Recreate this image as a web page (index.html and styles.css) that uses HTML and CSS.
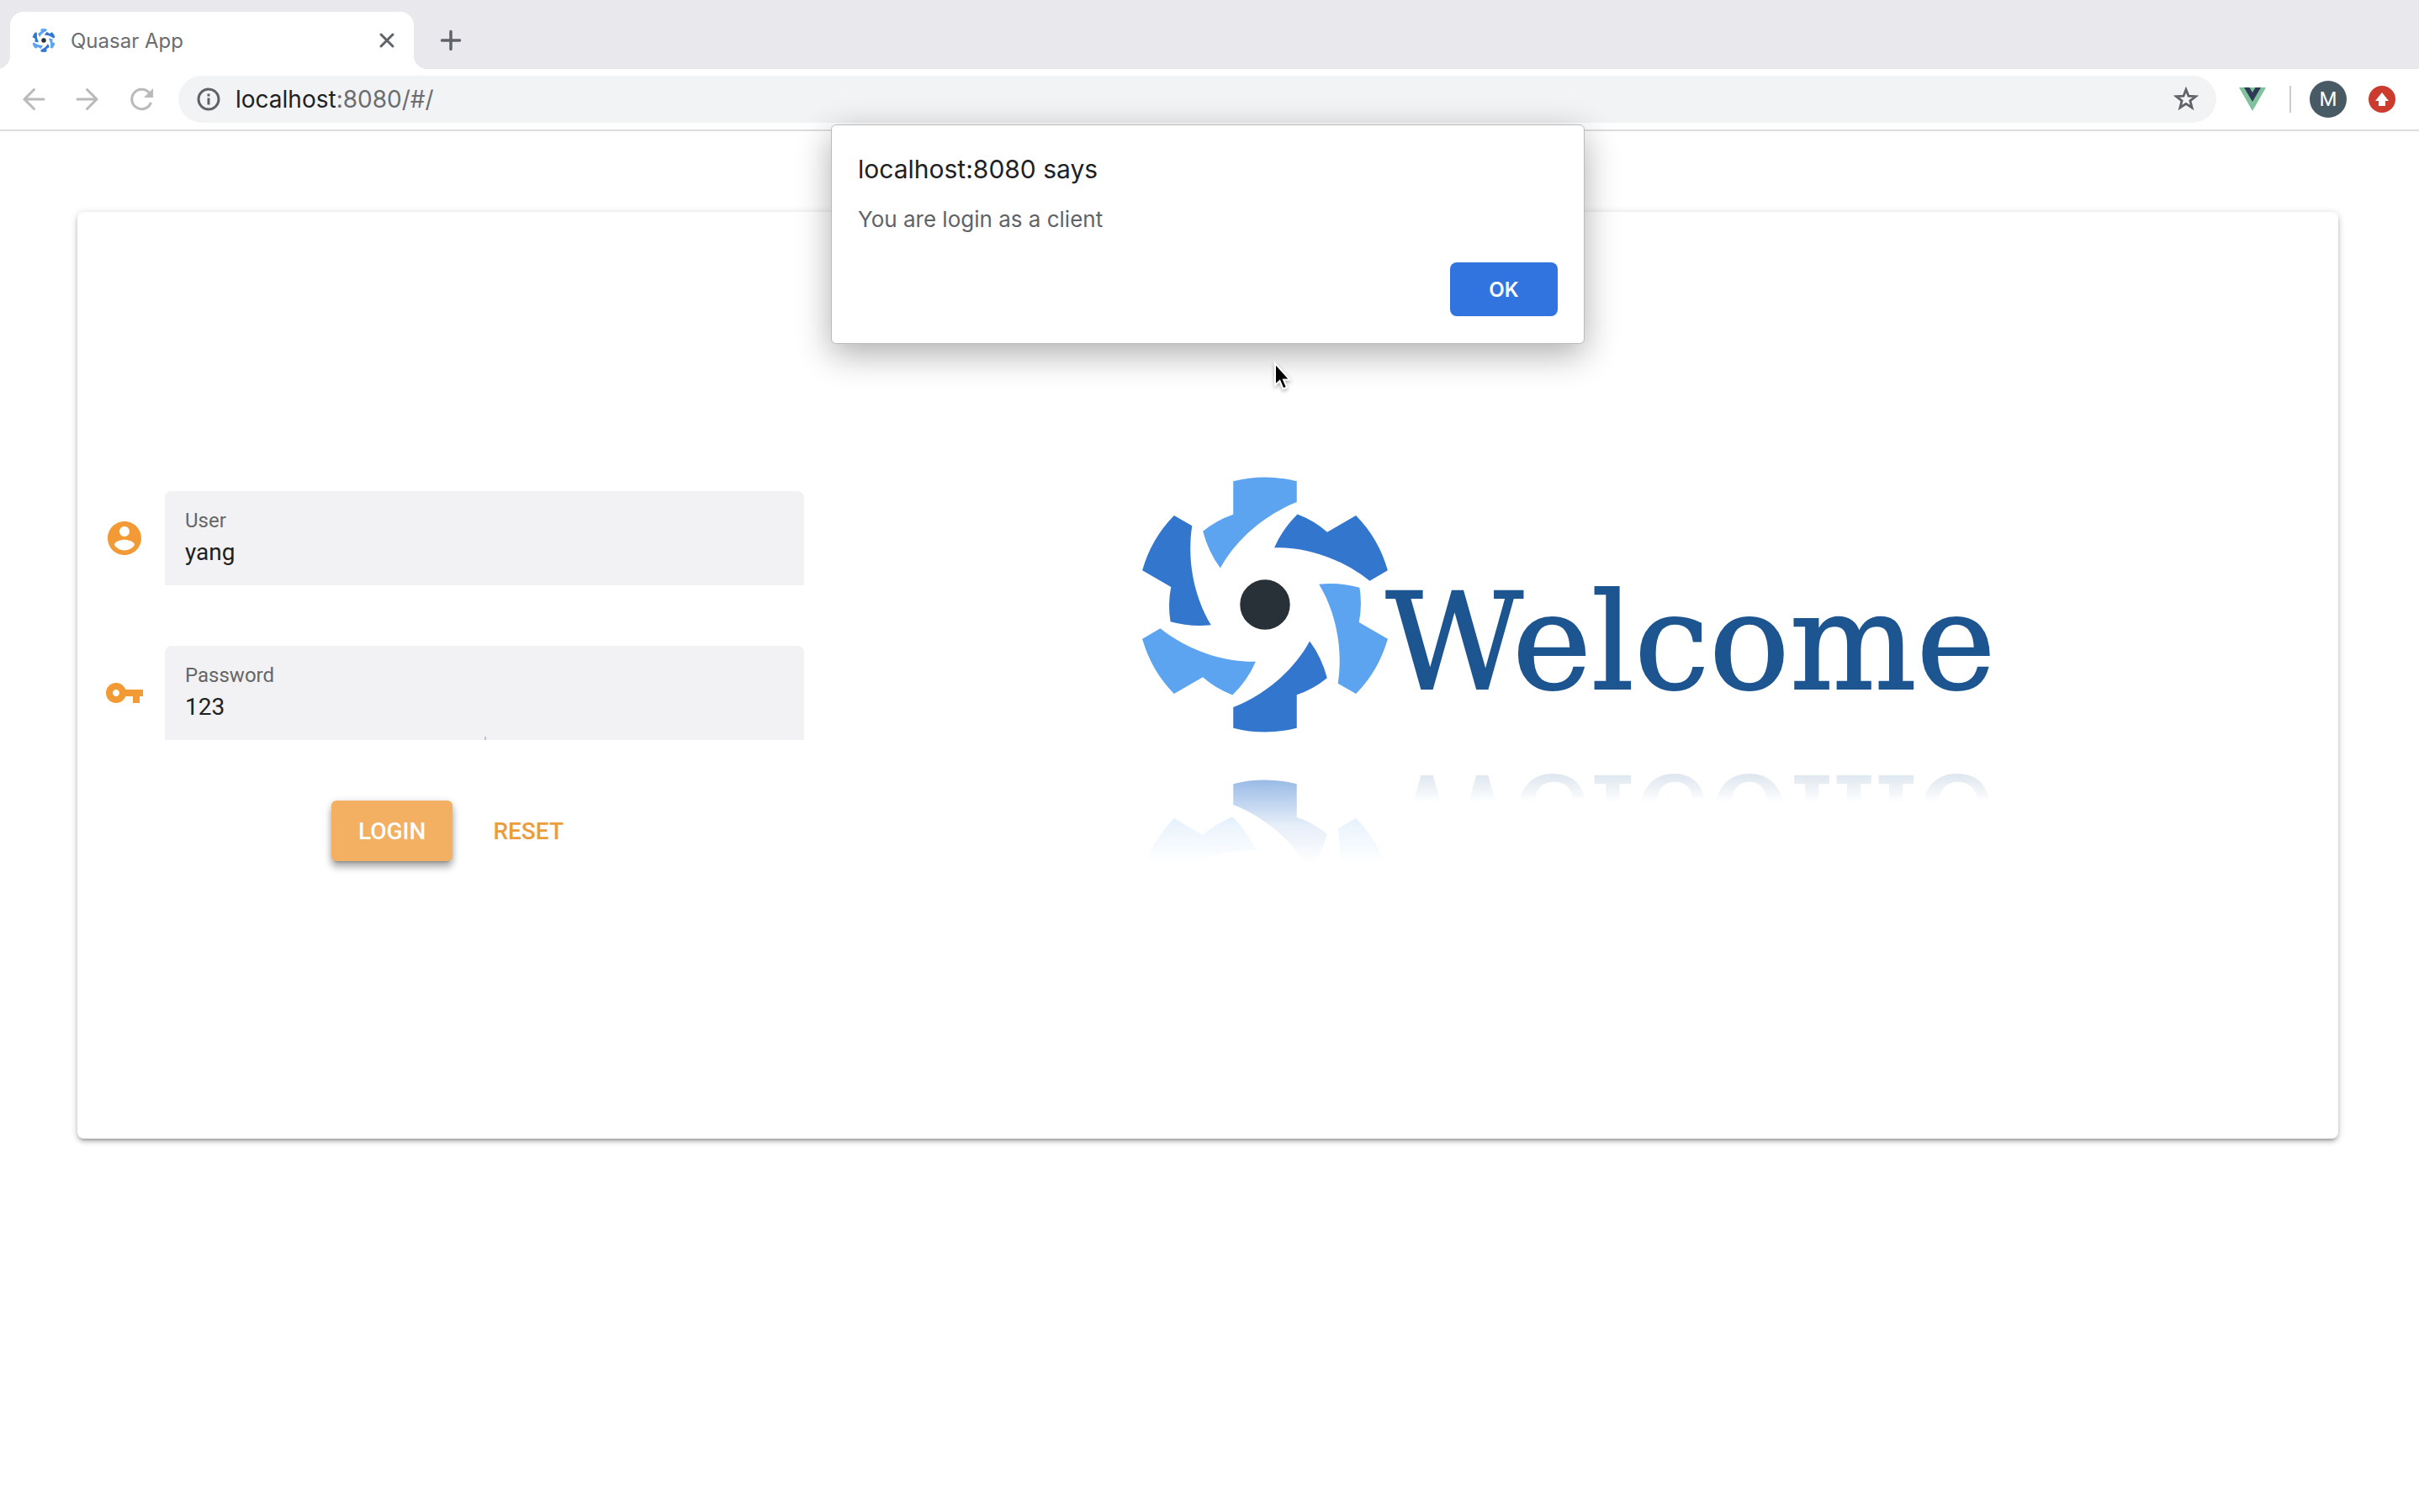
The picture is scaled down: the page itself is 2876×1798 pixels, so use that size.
FILE: index.html
```html
<!DOCTYPE html>
<html lang="en">
<head>
<meta charset="utf-8">
<title>Quasar App</title>
<link rel="stylesheet" href="styles.css">
</head>
<body>
<svg class="defs" aria-hidden="true">
  <defs>
    <path id="blade" d="M-113-439A454 454 0 0 1 113-439L113-365C10-325-97-243-159-130Q-202-188-221-261Q-172-301-113-321Z"/>
    <symbol id="quasar" viewBox="-440 -455 880 910">
      <g fill="#5ca4f0">
        <use href="#blade"/>
        <use href="#blade" transform="rotate(120)"/>
        <use href="#blade" transform="rotate(240)"/>
      </g>
      <g fill="#3376cd">
        <use href="#blade" transform="rotate(60)"/>
        <use href="#blade" transform="rotate(180)"/>
        <use href="#blade" transform="rotate(300)"/>
      </g>
      <circle r="89" fill="#283138"/>
    </symbol>
  </defs>
</svg>

<header class="browser">
  <div class="tabs">
    <div class="tab">
      <svg class="favicon" aria-hidden="true"><use href="#quasar"/></svg>
      <span class="tab-title">Quasar App</span>
      <button class="icon-button" aria-label="Close tab">
        <svg width="20" height="20" viewBox="0 0 20 20"><path d="M3 3L17 17M17 3L3 17" fill="none" stroke="#5f6368" stroke-width="3" stroke-linecap="round"/></svg>
      </button>
    </div>
    <button class="icon-button new-tab" aria-label="New tab">
      <svg width="28" height="28" viewBox="0 0 28 28"><path d="M14 3.500V24.500M3.500 14H24.500" fill="none" stroke="#5f6368" stroke-width="3.500" stroke-linecap="round"/></svg>
    </button>
  </div>
  <div class="toolbar">
    <nav class="history">
      <button class="icon-button" aria-label="Back">
        <svg width="32" height="32" viewBox="0 0 32 32"><path d="M28 16H5M16.500 4.500L5 16L16.500 27.500" fill="none" stroke="#bababc" stroke-width="3" stroke-linecap="round"/></svg>
      </button>
      <button class="icon-button" aria-label="Forward">
        <svg width="32" height="32" viewBox="0 0 32 32"><path d="M4 16H27M15.500 4.500L27 16L15.500 27.500" fill="none" stroke="#bababc" stroke-width="3" stroke-linecap="round"/></svg>
      </button>
      <button class="icon-button" aria-label="Reload">
        <svg width="32" height="32" viewBox="0 0 32 32"><path d="M27 21A11.700 11.700 0 1 1 25 8" fill="none" stroke="#bababc" stroke-width="3" stroke-linecap="round"/><path d="M30 3V14H19Z" fill="#bababc"/></svg>
      </button>
    </nav>
    <div class="omnibox">
      <button class="icon-button" aria-label="View site information">
        <svg width="28" height="28" viewBox="0 0 28 28"><circle cx="14" cy="14" r="12" fill="none" stroke="#5f6368" stroke-width="3"/><path d="M12.500 12.500H15.500V20.500H12.500ZM12.500 7.500H15.500V10.500H12.500Z" fill="#5f6368"/></svg>
      </button>
      <div class="url" role="textbox" aria-label="Address" contenteditable="true" spellcheck="false"><span class="host">localhost</span>:8080/#/</div>
      <button class="icon-button" aria-label="Bookmark this page">
        <svg width="30" height="30" viewBox="0 0 30 30"><path d="M15 3.500L18 11.200L26.500 11.700L19.900 16.900L22.100 25L15 20.400L7.900 25L10.100 16.900L3.500 11.700L12 11.200Z" fill="none" stroke="#5f6368" stroke-width="2.800"/></svg>
      </button>
    </div>
    <button class="icon-button" aria-label="Vue.js devtools">
      <svg width="32" height="28" viewBox="0 0 32 28"><path d="M0 0H32L16 28Z" fill="#7fc29b"/><path d="M6 0H12.500L16 6L19.500 0H26L16 17Z" fill="#2f3a56"/></svg>
    </button>
    <span class="divider"></span>
    <button class="avatar" aria-label="Profile">M</button>
    <button class="icon-button" aria-label="Update">
      <svg width="32" height="32" viewBox="0 0 32 32"><circle cx="16" cy="16" r="16" fill="#cc3c2e"/><path d="M16 8L24 18H20V24H12V18H8Z" fill="#fff"/></svg>
    </button>
  </div>
</header>

<main class="card">
  <form class="login">
    <div class="row">
      <svg class="row-icon" viewBox="0 0 24 24" aria-hidden="true"><path d="M12 2C6.480 2 2 6.480 2 12s4.480 10 10 10 10-4.480 10-10S17.520 2 12 2zm0 3c1.660 0 3 1.340 3 3s-1.340 3-3 3-3-1.340-3-3 1.340-3 3-3zm0 14.200c-2.500 0-4.710-1.280-6-3.220.030-1.990 4-3.080 6-3.080 1.990 0 5.970 1.090 6 3.080-1.290 1.940-3.500 3.220-6 3.220z"/></svg>
      <div class="field">
        <label for="user">User</label>
        <input id="user" type="text" value="yang">
      </div>
    </div>
    <div class="row">
      <svg class="row-icon" viewBox="0 0 24 24" aria-hidden="true"><path d="M12.650 10C11.830 7.670 9.610 6 7 6c-3.310 0-6 2.690-6 6s2.690 6 6 6c2.610 0 4.830-1.670 5.650-4H17v4h4v-4h2v-4H12.650zM7 14c-1.100 0-2-.900-2-2s.900-2 2-2 2 .900 2 2-.900 2-2 2z"/></svg>
      <div class="field marked">
        <label for="password">Password</label>
        <input id="password" type="text" value="123">
      </div>
    </div>
    <div class="actions">
      <button class="btn btn-solid" type="button">LOGIN</button>
      <button class="btn" type="reset">RESET</button>
    </div>
  </form>
  <section class="hero">
    <svg class="logo" role="img" aria-label="Quasar"><use href="#quasar"/></svg>
    <h1 class="welcome">Welcome</h1>
  </section>
</main>

<dialog class="alert" open>
  <h2>localhost:8080 says</h2>
  <p>You are login as a client</p>
  <button class="ok">OK</button>
</dialog>

<svg class="cursor" width="26" height="38" viewBox="0 0 26 38" aria-hidden="true"><path d="M3 3V29L8.500 24L12.500 33.500L17 31.500L13 22.500H20.500Z" fill="#000" stroke="#fff" stroke-width="2"/></svg>
</body>
</html>
```
FILE: styles.css
```css
* { box-sizing: border-box; }

body {
  margin: 0;
  background: #fff;
  color: #202124;
  font-family: Inter, "Liberation Sans", sans-serif;
}

h1, h2, p { margin: 0; font-weight: 400; }

button { border: 0; padding: 0; background: none; font: inherit; cursor: pointer; }

.defs { position: absolute; width: 0; height: 0; }

.icon-button { display: flex; flex: none; }

/* Browser chrome */
.tabs {
  display: flex;
  align-items: flex-end;
  height: 82px;
  padding-left: 12px;
  background: #e9e8ed;
}

.tab {
  position: relative;
  display: flex;
  align-items: center;
  gap: 18px;
  width: 480px;
  height: 68px;
  padding: 0 22px 0 26px;
  border-radius: 16px 16px 0 0;
  background: #fff;
}

.tab::before, .tab::after {
  content: "";
  position: absolute;
  bottom: 0;
  width: 16px;
  height: 16px;
}
.tab::before { right: 100%; background: radial-gradient(circle at 0 0, transparent 16px, #fff 16px); }
.tab::after { left: 100%; background: radial-gradient(circle at 100% 0, transparent 16px, #fff 16px); }

.favicon { width: 28px; height: 28px; }

.tab-title { flex: 1; color: #6b6d70; font-size: 24px; }

.new-tab { margin: 0 0 20px 30px; }

.toolbar {
  display: flex;
  align-items: center;
  height: 74px;
  padding: 0 28px 0 24px;
  border-bottom: 2px solid #dddce1;
}

.history { display: flex; gap: 32px; margin-right: 28px; }

.omnibox {
  display: flex;
  flex: 1;
  align-items: center;
  gap: 18px;
  height: 56px;
  margin-right: 27px;
  padding: 0 21px 0 22px;
  border-radius: 28px;
  background: #f2f3f5;
}

.url { flex: 1; color: #6b6d70; font-size: 28px; outline: 0; }
.host { color: #202124; }

.divider { width: 2px; height: 32px; margin: 0 22px 0 28px; background: #ccc; }

.avatar {
  width: 44px;
  height: 44px;
  margin-right: 26px;
  border-radius: 50%;
  background: #485a64;
  color: #fff;
  font-family: Roboto, sans-serif;
  font-size: 24px;
}

/* Login card */
.card {
  display: grid;
  grid-template-columns: 1fr 2fr;
  align-items: center;
  margin: 96px 96px 96px 92px;
  padding: 315px 0;
  border-radius: 8px;
  box-shadow: 0 2px 10px rgba(0, 0, 0, .2), 0 4px 4px rgba(0, 0, 0, .14), 0 6px 2px -4px rgba(0, 0, 0, .12);
  font-family: Roboto, sans-serif;
}

.login { display: flex; flex-direction: column; gap: 72px; padding: 2px 32px 0; }

.row { display: flex; align-items: center; gap: 24px; }

.row-icon { width: 48px; height: 48px; fill: #f29b36; }

.field {
  position: relative;
  display: flex;
  flex: 1;
  flex-direction: column;
  height: 112px;
  padding: 20px 24px;
  border-radius: 8px 8px 0 0;
  background: #f2f2f4;
}

.field label { color: #666; font-size: 24px; line-height: 30px; }

.field input {
  width: 100%;
  height: 46px;
  padding: 0;
  border: 0;
  outline: 0;
  background: none;
  color: #212121;
  font: 28px/46px Roboto, sans-serif;
}

.marked::after {
  content: "";
  position: absolute;
  bottom: 0;
  left: 50%;
  width: 2px;
  height: 4px;
  background: #b9c3d6;
}

.actions { display: flex; justify-content: center; gap: 16px; padding-left: 16px; }

.btn {
  height: 72px;
  padding: 0 32px;
  border-radius: 6px;
  color: #eb9c3b;
  font-size: 28px;
  font-weight: 500;
}

.btn-solid {
  background: #f3af62;
  box-shadow: 0 2px 10px rgba(0, 0, 0, .2), 0 8px 8px rgba(0, 0, 0, .24), 0 6px 2px -4px rgba(0, 0, 0, .12);
  color: #fff;
}

.hero {
  display: flex;
  align-items: flex-end;
  justify-content: center;
  padding: 0 38px 168px 0;
}

.logo {
  width: 294px;
  height: 304px;
  -webkit-box-reflect: below 56px linear-gradient(transparent 67%, rgba(0, 0, 0, .12) 82%, rgba(0, 0, 0, .5));
}

.welcome {
  margin-left: -4px;
  padding-bottom: 16px;
  color: #1d5591;
  font: 159px/182px "DejaVu Serif", serif;
  -webkit-text-stroke: 2px #1d5591;
  -webkit-box-reflect: below 0 linear-gradient(transparent 58%, rgba(0, 0, 0, .15) 75%);
}

/* Script alert */
.alert {
  position: absolute;
  top: 148px;
  right: 4px;
  left: 0;
  display: flex;
  flex-direction: column;
  width: 896px;
  margin: 0 auto;
  padding: 32px 31px;
  border: 1px solid #bbb;
  border-radius: 6px;
  background: #fff;
  box-shadow: 0 12px 40px rgba(0, 0, 0, .32);
}

.alert h2 { color: #202124; font-size: 30px; line-height: 40px; }

.alert p { margin: 22px 0 33px; color: #5f6368; font-size: 26px; line-height: 36px; }

.ok {
  align-self: flex-end;
  width: 128px;
  height: 64px;
  border-radius: 8px;
  background: #3174e0;
  color: #fff;
  font-size: 24px;
  font-weight: 600;
}

.cursor {
  position: absolute;
  top: 429px;
  left: 1513px;
  filter: drop-shadow(0 2px 2px rgba(0, 0, 0, .3));
}
```
